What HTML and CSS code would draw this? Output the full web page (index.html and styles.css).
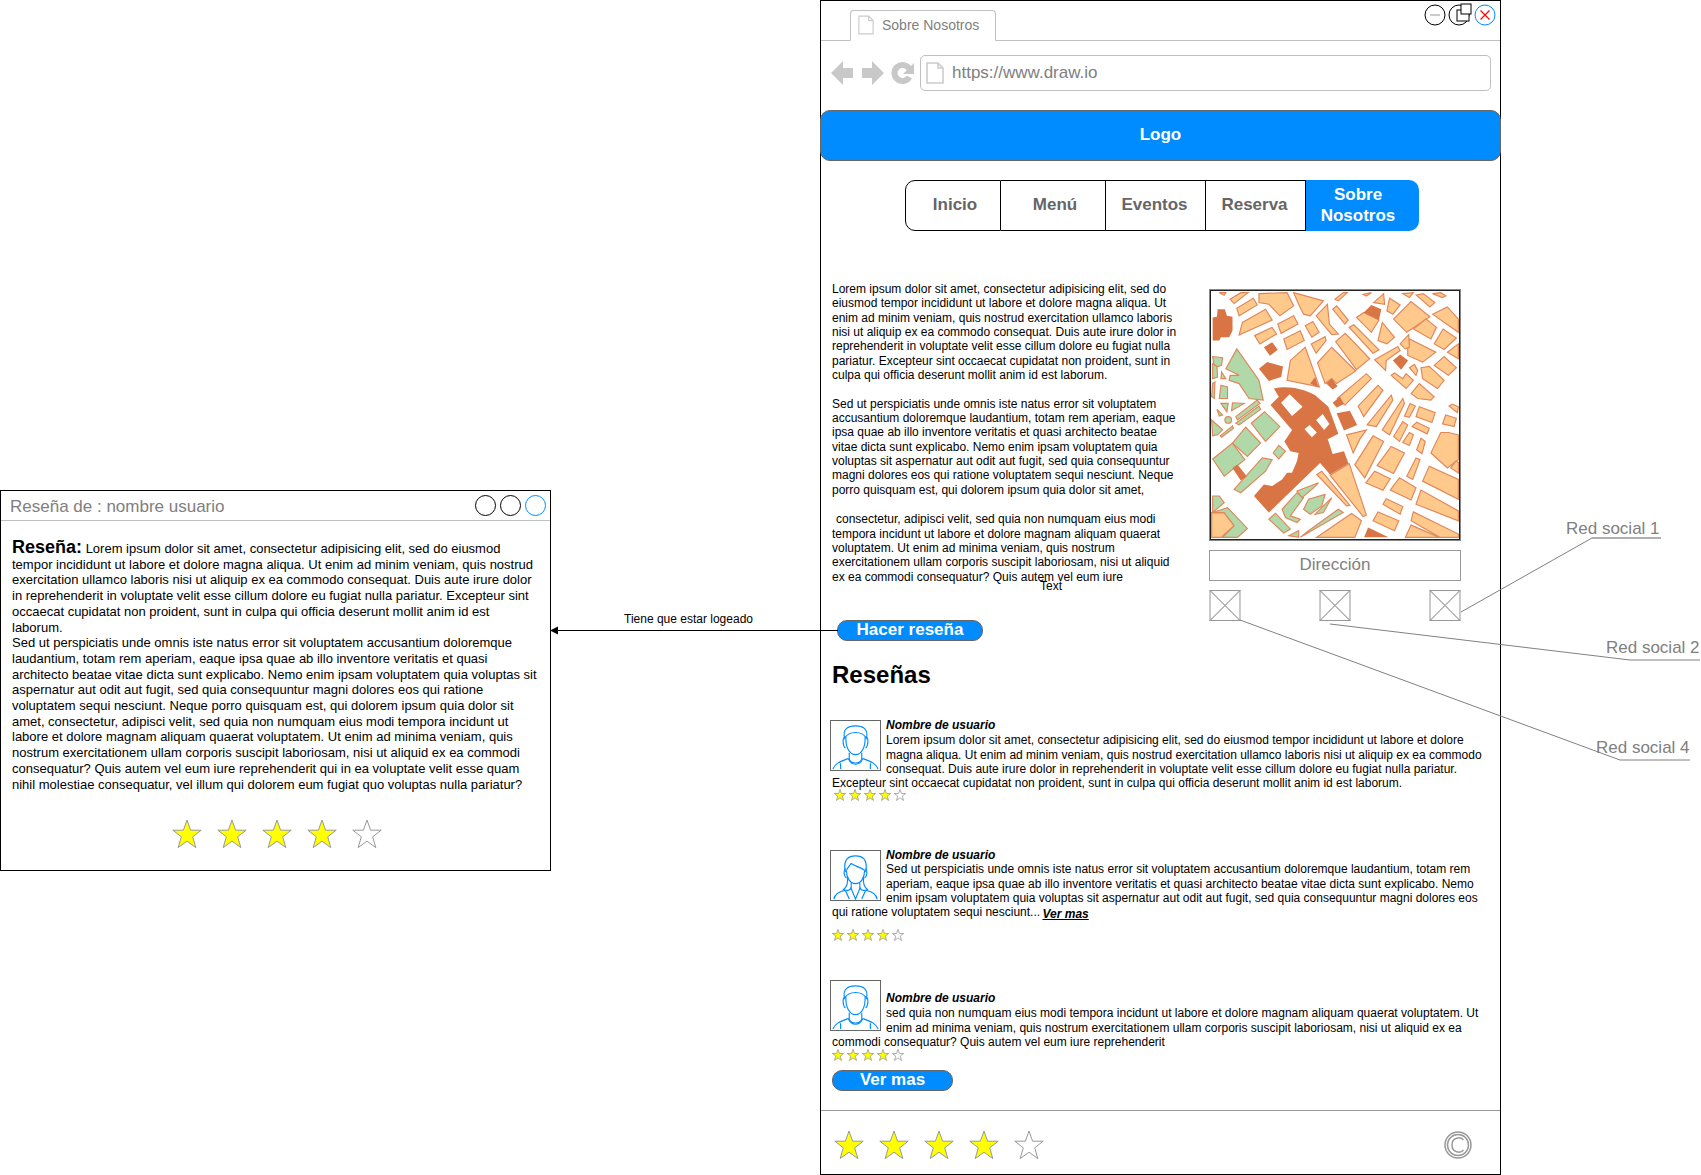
FILE: index.html
```html
<!DOCTYPE html>
<html lang="es">

<head>
    <meta charset="UTF-8">
    <title>Sobre Nosotros</title>
    <link rel="stylesheet" href="styles.css">
</head>

<body>
    <!-- iconos reutilizados -->
    <svg class="defs" width="0" height="0">
        <symbol id="star" viewBox="0 0 30 30">
            <path d="M15 1 L18.6 11.2 L29.2 11.2 L20.7 17.8 L23.8 28.6 L15 22.2 L6.2 28.6 L9.3 17.8 L0.8 11.2 L11.4 11.2 Z"/>
        </symbol>
        <symbol id="doc" viewBox="0 0 18 22">
            <path d="M1 1 H12 L17 6 V21 H1 Z M12 1 V6 H17" fill="none"/>
        </symbol>
        <symbol id="man" viewBox="0 0 51 51">
            <g fill="none" stroke="#008cff" stroke-width="1.2">
                <path d="M14 18 C12 8 18 5 25.5 5 C33 5 39 8 37 18 C34 13 30 12 25.5 12 C21 12 17 13 14 18 Z"/>
                <path d="M15.5 16 C15 27 19 35 25.5 35 C32 35 36 27 35.5 16"/>
                <path d="M14 17 C12 18 12 26 15 28 M37 17 C39 18 39 26 36 28"/>
                <path d="M19 33 V40 C22 45 29 45 32 40 V33"/>
                <path d="M18 39 C21 47 30 47 33 39"/>
                <path d="M2 50 C4 44 10 42 18 39 M49 50 C47 44 41 42 33 39"/>
                <path d="M10 50 V44 M41 50 V44"/>
            </g>
        </symbol>
        <symbol id="woman" viewBox="0 0 51 51">
            <g fill="none" stroke="#008cff" stroke-width="1.2">
                <path d="M15 22 C12 8 19 5 25.5 5 C32 5 39 8 36 22"/>
                <path d="M16 20 C18 17 20 14 21 13 C25 16 31 17 35 20"/>
                <path d="M16 20 C16 28 20 34 25.5 34 C31 34 35 28 35 20"/>
                <path d="M15 18 C13 20 13 26 16 28 M36 18 C38 20 38 26 35 28"/>
                <path d="M17 27 C18 34 16 38 13 40 C17 42 20 41 21 38 M34 27 C33 34 35 38 38 40 C34 42 31 41 30 38"/>
                <path d="M21 33 V39 L25.5 50 L30 39 V33"/>
                <path d="M3 50 C4 45 9 42 15 41 M48 50 C47 45 42 42 36 41"/>
                <path d="M15 41 L19 50 M36 41 L32 50"/>
            </g>
        </symbol>
    </svg>

    <main class="canvas">
        <!-- ventana: reseña -->
        <section class="popup">
            <header class="popup-title">
                <span>Reseña de : nombre usuario</span>
                <div class="popup-btns">
                    <i class="dot"></i>
                    <i class="dot"></i>
                    <i class="dot dot-blue"></i>
                </div>
            </header>
            <div class="popup-body">
                <p><b>Reseña:</b> Lorem ipsum dolor sit amet, consectetur adipisicing elit, sed do eiusmod tempor incididunt ut labore et dolore magna aliqua. Ut enim ad minim veniam, quis nostrud exercitation ullamco laboris nisi ut aliquip ex ea commodo consequat. Duis aute irure dolor in reprehenderit in voluptate velit esse cillum dolore eu fugiat nulla pariatur. Excepteur sint occaecat cupidatat non proident, sunt in culpa qui officia deserunt mollit anim id est laborum.<br>
                Sed ut perspiciatis unde omnis iste natus error sit voluptatem accusantium doloremque laudantium, totam rem aperiam, eaque ipsa quae ab illo inventore veritatis et quasi architecto beatae vitae dicta sunt explicabo. Nemo enim ipsam voluptatem quia voluptas sit aspernatur aut odit aut fugit, sed quia consequuntur magni dolores eos qui ratione voluptatem sequi nesciunt. Neque porro quisquam est, qui dolorem ipsum quia dolor sit amet, consectetur, adipisci velit, sed quia non numquam eius modi tempora incidunt ut labore et dolore magnam aliquam quaerat voluptatem. Ut enim ad minima veniam, quis nostrum exercitationem ullam corporis suscipit laboriosam, nisi ut aliquid ex ea commodi consequatur? Quis autem vel eum iure reprehenderit qui in ea voluptate velit esse quam nihil molestiae consequatur, vel illum qui dolorem eum fugiat quo voluptas nulla pariatur?</p>
                <div class="stars stars-big popup-stars">
                    <svg class="on"><use href="#star"/></svg>
                    <svg class="on"><use href="#star"/></svg>
                    <svg class="on"><use href="#star"/></svg>
                    <svg class="on"><use href="#star"/></svg>
                    <svg class="off"><use href="#star"/></svg>
                </div>
            </div>
        </section>

        <!-- ventana: navegador -->
        <section class="browser">
            <div class="tabbar">
                <div class="tab">
                    <svg class="doc-tab"><use href="#doc"/></svg>
                    <span>Sobre Nosotros</span>
                </div>
                <div class="win-btns">
                    <svg width="26" height="26" viewBox="0 0 26 26"><circle cx="13" cy="14" r="10" fill="#fff" stroke="#000"/><path d="M8 14 H18" stroke="#999"/></svg>
                    <svg width="26" height="26" viewBox="0 0 26 26"><circle cx="12" cy="14" r="10" fill="#fff" stroke="#000"/><rect x="10" y="9" width="12" height="11" fill="#fff" stroke="#000"/><rect x="14" y="3" width="10" height="10" fill="#fff" stroke="#000"/></svg>
                    <svg width="26" height="26" viewBox="0 0 26 26"><circle cx="13" cy="14" r="10" fill="#fff" stroke="#008cff"/><path d="M8.5 9.5 L17.5 18.5 M17.5 9.5 L8.5 18.5" stroke="#f00" stroke-width="1.2"/></svg>
                </div>
            </div>

            <div class="toolbar">
                <svg class="nav-icons" width="84" height="26" viewBox="0 0 84 26">
                    <path d="M0 13 L12 1 V8 H22 V18 H12 V25 Z"/>
                    <path d="M53 13 L41 1 V8 H31 V18 H41 V25 Z"/>
                    <path d="M78.4 9 A8 8 0 1 0 78.4 17" fill="none" stroke="#c8c8c8" stroke-width="6"/>
                    <path d="M83 3 V14 H72 Z"/>
                </svg>
                <div class="urlbar">
                    <svg class="doc-url"><use href="#doc"/></svg>
                    <span>https://www.draw.io</span>
                </div>
            </div>

            <div class="logo">Logo</div>

            <nav class="menu">
                <a href="#" class="m1">Inicio</a>
                <a href="#" class="m2">Menú</a>
                <a href="#" class="m3">Eventos</a>
                <a href="#" class="m4">Reserva</a>
                <a href="#" class="m5 active">Sobre Nosotros</a>
            </nav>

            <div class="about">
                <div class="about-text">
                    <p>Lorem ipsum dolor sit amet, consectetur adipisicing elit, sed do eiusmod tempor incididunt ut labore et dolore magna aliqua. Ut enim ad minim veniam, quis nostrud exercitation ullamco laboris nisi ut aliquip ex ea commodo consequat. Duis aute irure dolor in reprehenderit in voluptate velit esse cillum dolore eu fugiat nulla pariatur. Excepteur sint occaecat cupidatat non proident, sunt in culpa qui officia deserunt mollit anim id est laborum.</p>
                    <p class="second">Sed ut perspiciatis unde omnis iste natus error sit voluptatem accusantium doloremque laudantium, totam rem aperiam, eaque ipsa quae ab illo inventore veritatis et quasi architecto beatae vitae dicta sunt explicabo. Nemo enim ipsam voluptatem quia voluptas sit aspernatur aut odit aut fugit, sed quia consequuntur magni dolores eos qui ratione voluptatem sequi nesciunt. Neque porro quisquam est, qui dolorem ipsum quia dolor sit amet,</p>
                    <p class="indent">consectetur, adipisci velit, sed quia non numquam eius modi tempora incidunt ut labore et dolore magnam aliquam quaerat voluptatem. Ut enim ad minima veniam, quis nostrum exercitationem ullam corporis suscipit laboriosam, nisi ut aliquid ex ea commodi consequatur? Quis autem vel eum iure</p>
                    <span class="stray">Text</span>
                    <a href="#" class="btn btn-review">Hacer reseña</a>
                </div>
                <aside class="side">
                    <svg class="map" viewBox="60 30 750 750">
                        <g class="blocks">
                            <path d="M85 35 H105 L100 43 Z"/><path d="M118 55 L150 35 H172 L130 68 Z"/><path d="M205 38 L290 35 L310 75 L268 105 L235 70 L205 65 Z"/><path d="M310 35 L400 60 L360 105 L340 100 L325 70 Z"/>
                            <path d="M138 82 L188 52 L200 72 L145 105 Z"/><path d="M145 163 L155 125 L225 85 L245 118 Z"/><path d="M262 130 L310 105 L323 130 L272 158 Z"/><path d="M192 165 L245 140 L258 160 L208 190 Z"/>
                            <path d="M280 175 L330 150 L342 180 L290 207 Z"/><path d="M345 135 L368 122 L387 155 L365 170 Z"/><path d="M378 105 L412 70 L418 130 L445 160 L425 162 Z"/><path d="M428 85 L440 75 L475 118 L465 130 Z"/>
                            <path d="M435 55 L460 35 H472 L445 60 Z"/><path d="M520 40 L545 35 L530 45 Z"/><path d="M552 65 L582 38 L585 70 Z"/><path d="M592 90 L600 52 L632 72 L610 100 Z"/>
                            <path d="M612 115 L665 62 L722 108 L652 155 Z"/><path d="M680 42 L702 38 L737 65 L722 78 Z"/><path d="M640 38 L672 35 L660 50 Z"/><path d="M730 38 L755 35 L770 45 L760 50 Z"/>
                            <path d="M730 100 L775 78 L808 115 V155 Z"/><path d="M672 145 L710 115 L742 140 L725 175 Z"/><path d="M735 190 L762 145 L802 172 L765 207 Z"/><path d="M775 215 L808 190 V235 Z"/>
                            <path d="M735 255 L765 228 L802 262 L778 285 Z"/><path d="M655 205 L660 175 L740 215 L700 245 L655 225 Z"/><path d="M632 190 L658 162 L660 200 L648 205 Z"/><path d="M555 238 L625 198 L632 210 L590 240 L588 270 Z"/>
                            <path d="M565 180 L578 125 L615 170 L592 190 Z"/><path d="M478 140 L492 132 L568 208 L550 218 Z"/><path d="M437 183 L466 158 L540 235 L500 268 Z"/><path d="M363 190 L405 168 L408 180 L378 218 Z"/>
                            <path d="M382 247 L425 200 L498 272 L440 310 L425 295 L405 310 Z"/><path d="M290 300 L300 240 L345 200 L388 320 Z"/><path d="M500 110 L522 95 L568 118 L545 155 Z"/><path d="M442 355 L530 280 L545 295 L465 375 Z"/>
                            <path d="M505 378 L565 315 L580 330 L522 410 Z"/><path d="M532 435 L605 345 L610 360 L560 440 Z"/><path d="M578 450 L640 355 L645 370 L600 465 Z"/><path d="M612 470 L640 425 L655 435 L630 485 Z"/>
                            <path d="M645 408 L662 370 L678 378 L660 412 Z"/><path d="M680 410 L690 380 L738 398 L728 428 Z"/><path d="M668 440 L682 427 L720 445 L714 462 Z"/><path d="M640 488 L660 458 L672 465 L660 497 Z"/>
                            <path d="M682 510 L695 475 L708 485 L698 522 Z"/><path d="M760 432 L770 405 L802 415 L795 440 Z"/><path d="M725 520 L755 458 L778 458 L808 465 V540 L775 565 Z"/><path d="M780 378 L790 372 L808 380 L805 398 Z"/>
                            <path d="M785 565 L800 545 L808 548 V580 Z"/><path d="M470 465 L530 450 L510 478 L490 520 Z"/><path d="M495 555 L550 468 L582 485 L525 595 Z"/><path d="M562 558 L605 500 L645 520 L612 582 Z"/>
                            <path d="M652 590 L680 535 L692 540 L670 600 Z"/><path d="M528 610 L555 575 L602 598 L580 633 Z"/><path d="M602 632 L630 595 L680 625 L665 662 Z"/><path d="M700 605 L720 560 L808 600 V660 Z"/>
                            <path d="M680 675 L695 632 L808 695 V725 Z"/><path d="M665 725 L672 698 L808 765 V775 H752 Z"/><path d="M580 675 L590 658 L640 682 L632 705 Z"/><path d="M550 725 L565 698 L628 725 L615 755 Z"/>
                            <path d="M648 775 L665 738 L750 775 Z"/><path d="M380 775 L485 703 L515 725 L495 775 Z"/><path d="M380 585 L395 575 L480 678 L470 680 Z"/><path d="M420 587 L478 552 L530 708 L520 712 Z"/>
                            <path d="M62 700 L100 700 L130 740 L90 775 H62 Z"/><path d="M605 285 L615 278 L640 295 L650 280 L672 300 L650 325 Z"/><path d="M665 340 L690 310 L735 350 L725 360 L685 355 Z"/><path d="M660 262 L675 252 L685 270 L680 285 Z"/><path d="M695 262 L720 258 L765 300 L745 325 L700 295 Z"/>
                        </g>
                        <g class="parks">
                            <path d="M65 228 L95 232 L92 255 L70 262 Z"/><path d="M105 265 L138 205 L205 300 L218 360 L175 355 L145 310 L115 300 L118 285 L145 285 Z"/><path d="M182 430 L222 395 L268 440 L225 485 Z"/><path d="M125 490 L165 442 L210 490 L170 530 Z"/>
                            <path d="M65 538 L125 490 L162 540 L100 590 Z"/><path d="M130 630 L215 535 L245 540 L225 575 L150 640 Z"/><path d="M248 520 L265 497 L285 515 L265 538 Z"/><path d="M62 420 L95 450 L80 465 L65 468 Z"/>
                            <path d="M135 410 L200 360 L208 370 L140 420 Z"/><path d="M135 430 L205 378 L210 388 L145 435 Z"/><path d="M88 468 L125 438 L128 445 L92 472 Z"/><path d="M85 355 L90 315 L110 320 L110 355 Z"/>
                            <path d="M122 392 L125 368 L160 370 Z"/><path d="M90 370 H112 L108 395 Z"/><path d="M78 388 L95 405 L85 408 Z"/><circle cx="112" cy="420" r="10"/>
                            <path d="M65 310 L72 305 L70 355 L62 350 Z"/><path d="M65 250 L78 258 L80 290 L65 295 Z"/><path d="M92 275 L105 295 H90 Z"/><path d="M65 650 H85 L100 670 L65 700 Z"/>
                            <path d="M65 700 L110 685 L170 748 L140 775 H95 L130 740 L100 700 Z"/><path d="M235 720 L255 702 L300 750 L280 762 Z"/><path d="M275 690 L320 640 L340 655 L300 710 L330 720 L320 730 L285 715 Z"/><path d="M320 635 L385 610 L365 630 L335 655 Z"/>
                            <path d="M340 690 L355 660 L405 645 L395 680 L360 705 Z"/><path d="M375 705 L425 655 L400 700 Z"/><path d="M355 755 L445 690 L460 700 L330 775 Z"/><path d="M295 770 L325 755 V775 Z"/>
                        </g>
                        <g class="dark">
                            <path d="M65 110 L78 108 L80 85 H102 L108 105 L125 108 V150 L115 170 H90 L85 180 H65 Z"/><path d="M220 200 L245 185 L262 208 L238 226 Z"/><path d="M205 265 L230 245 L278 258 L272 290 L235 302 Z"/><path d="M522 95 L545 72 L575 85 L568 118 Z"/>
                            <path d="M610 240 L632 222 L656 240 L635 268 Z"/><path d="M360 310 L375 290 L385 322 Z"/><path d="M408 310 L425 295 L443 318 L428 328 Z"/><path d="M428 368 L450 350 L462 372 L440 382 Z"/>
                            <path d="M440 400 L480 392 L502 435 L462 452 Z"/><path d="M523 775 L535 745 L597 775 Z"/><path d="M125 565 L140 555 L168 590 L150 603 Z"/>
                            <path d="M250 325 C290 315 340 325 375 345 L415 380 L445 462 L413 478 L428 523 L462 515 L476 552 L420 585 L390 550 L235 700 L190 650 L220 615 L245 620 L275 600 L290 580 L305 580 L320 545 L325 520 L300 515 L282 485 L305 450 L240 375 L265 350 Z"/>
                        </g>
                        <g class="holes">
                            <path d="M272 368 L298 342 L337 380 L305 408 Z"/><path d="M378 420 L398 402 L418 432 L402 450 Z"/><path d="M343 448 L358 435 L380 458 L365 472 Z"/>
                        </g>
                    </svg>
                    <div class="address">Dirección</div>
                    <div class="socials">
                        <svg viewBox="0 0 30 30"><rect x="0.5" y="0.5" width="29" height="29"/><path d="M0 0 L30 30 M30 0 L0 30"/></svg>
                        <svg viewBox="0 0 30 30"><rect x="0.5" y="0.5" width="29" height="29"/><path d="M0 0 L30 30 M30 0 L0 30"/></svg>
                        <svg viewBox="0 0 30 30"><rect x="0.5" y="0.5" width="29" height="29"/><path d="M0 0 L30 30 M30 0 L0 30"/></svg>
                    </div>
                </aside>
            </div>

            <section class="reviews">
                <h2>Reseñas</h2>

                <article class="review r1">
                    <svg class="avatar"><use href="#man"/></svg>
                    <p><b>Nombre de usuario</b>
                    Lorem ipsum dolor sit amet, consectetur adipisicing elit, sed do eiusmod tempor incididunt ut labore et dolore magna aliqua. Ut enim ad minim veniam, quis nostrud exercitation ullamco laboris nisi ut aliquip ex ea commodo consequat. Duis aute irure dolor in reprehenderit in voluptate velit esse cillum dolore eu fugiat nulla pariatur. Excepteur sint occaecat cupidatat non proident, sunt in culpa qui officia deserunt mollit anim id est laborum.</p>
                    <div class="stars">
                        <svg class="on"><use href="#star"/></svg>
                        <svg class="on"><use href="#star"/></svg>
                        <svg class="on"><use href="#star"/></svg>
                        <svg class="on"><use href="#star"/></svg>
                        <svg class="off"><use href="#star"/></svg>
                    </div>
                </article>

                <article class="review r2">
                    <svg class="avatar"><use href="#woman"/></svg>
                    <p><b>Nombre de usuario</b>
                    Sed ut perspiciatis unde omnis iste natus error sit voluptatem accusantium doloremque laudantium, totam rem aperiam, eaque ipsa quae ab illo inventore veritatis et quasi architecto beatae vitae dicta sunt explicabo. Nemo enim ipsam voluptatem quia voluptas sit aspernatur aut odit aut fugit, sed quia consequuntur magni dolores eos qui ratione voluptatem sequi nesciunt... <a href="#" class="more">Ver mas</a></p>
                    <div class="stars">
                        <svg class="on"><use href="#star"/></svg>
                        <svg class="on"><use href="#star"/></svg>
                        <svg class="on"><use href="#star"/></svg>
                        <svg class="on"><use href="#star"/></svg>
                        <svg class="off"><use href="#star"/></svg>
                    </div>
                </article>

                <article class="review r3">
                    <svg class="avatar"><use href="#man"/></svg>
                    <p><b>Nombre de usuario</b>
                    sed quia non numquam eius modi tempora incidunt ut labore et dolore magnam aliquam quaerat voluptatem. Ut enim ad minima veniam, quis nostrum exercitationem ullam corporis suscipit laboriosam, nisi ut aliquid ex ea commodi consequatur? Quis autem vel eum iure reprehenderit</p>
                    <div class="stars">
                        <svg class="on"><use href="#star"/></svg>
                        <svg class="on"><use href="#star"/></svg>
                        <svg class="on"><use href="#star"/></svg>
                        <svg class="on"><use href="#star"/></svg>
                        <svg class="off"><use href="#star"/></svg>
                    </div>
                </article>

                <a href="#" class="btn btn-more">Ver mas</a>
            </section>

            <footer class="foot">
                <div class="stars stars-big">
                    <svg class="on"><use href="#star"/></svg>
                    <svg class="on"><use href="#star"/></svg>
                    <svg class="on"><use href="#star"/></svg>
                    <svg class="on"><use href="#star"/></svg>
                    <svg class="off"><use href="#star"/></svg>
                </div>
                <svg class="copy" width="28" height="28" viewBox="0 0 28 28">
                    <circle cx="14" cy="14" r="13"/>
                    <circle cx="14" cy="14" r="10.5"/>
                    <path d="M19.5 9 C16.5 5.5 8 6 8 14 C8 22 16.5 22.5 19.5 19"/>
                </svg>
            </footer>
        </section>

        <!-- lineas y notas sobre el lienzo -->
        <svg class="wires" width="1701" height="1175">
            <path class="wire" d="M1461 612 L1592 538"/>
            <path class="wire-thick" d="M1592 538 H1661"/>
            <path class="wire" d="M1330 624 L1630 660 H1700"/>
            <path class="wire" d="M1240 620 L1620 760 H1690"/>
            <path class="arrow" d="M838 630.5 H556"/>
            <path d="M550 630.5 L558 626.5 V634.5 Z"/>
        </svg>
        <span class="note n1">Red social 1</span>
        <span class="note n2">Red social 2</span>
        <span class="note n4">Red social 4</span>
        <span class="edge-label">Tiene que estar logeado</span>
    </main>
</body>

</html>
```

FILE: styles.css
```css
* {
    box-sizing: border-box;
}

body {
    margin: 0;
    background: #fff;
    font-family: "Liberation Sans", Arial, sans-serif;
    color: #000;
}

p {
    margin: 0;
}

a {
    text-decoration: none;
}

.defs {
    position: absolute;
}

.canvas {
    position: relative;
    width: 1701px;
    height: 1175px;
    overflow: hidden;
}

/* estrellas */
.stars {
    display: flex;
    gap: 3px;
}

.stars svg {
    width: 12px;
    height: 12px;
    stroke: #999;
    stroke-width: 2;
}

.stars-big {
    gap: 15px;
}

.stars-big svg {
    width: 30px;
    height: 30px;
    stroke-width: 1;
}

.stars .on {
    fill: #ff0;
}

.stars .off {
    fill: #fff;
}

/* ventana de la reseña */
.popup {
    position: absolute;
    left: 0;
    top: 490px;
    width: 551px;
    height: 381px;
    border: 1px solid #000;
}

.popup-title {
    display: flex;
    justify-content: space-between;
    align-items: center;
    height: 30px;
    padding: 2px 4px 0 9px;
    border-bottom: 1px solid #c0c0c0;
    font-size: 17px;
    color: #808080;
}

.popup-btns {
    display: flex;
    gap: 4px;
    margin-top: -2px;
}

.dot {
    width: 21px;
    height: 21px;
    border: 1px solid #000;
    border-radius: 50%;
}

.dot-blue {
    border-color: #008cff;
}

.popup-body {
    padding: 19px 11px 0;
    font-size: 13px;
    line-height: 15.7px;
}

.popup-body b {
    font-size: 18px;
}

.popup-stars {
    justify-content: center;
    margin-top: 27px;
    padding-left: 3px;
}

/* ventana del navegador */
.browser {
    position: absolute;
    left: 820px;
    top: 0;
    width: 681px;
    height: 1175px;
    display: flex;
    flex-direction: column;
    border: 1px solid #000;
}

.tabbar {
    position: relative;
    height: 40px;
    padding-left: 29px;
    border-bottom: 1px solid #c0c0c0;
}

.tab {
    display: flex;
    align-items: center;
    gap: 8px;
    width: 146px;
    height: 31px;
    margin-top: 9px;
    padding: 0 7px 2px;
    background: #fff;
    border: 1px solid #c0c0c0;
    border-bottom-color: #fff;
    border-radius: 4px 4px 0 0;
    font-size: 14px;
    color: #808080;
}

.doc-tab {
    width: 16px;
    height: 20px;
    stroke: #ccc;
    stroke-width: 1.3;
}

.win-btns {
    position: absolute;
    right: 2px;
    top: 0;
    display: flex;
}

.win-btns svg {
    margin-left: -1px;
}

.toolbar {
    display: flex;
    align-items: center;
    height: 69px;
    padding: 0 9px 6px 10px;
}

.nav-icons {
    flex: none;
    margin-right: 5px;
    fill: #c8c8c8;
}

.urlbar {
    display: flex;
    align-items: center;
    gap: 8px;
    flex: 1;
    height: 36px;
    padding-left: 5px;
    border: 1px solid #c0c0c0;
    border-radius: 5px;
    font-size: 17px;
    color: #808080;
}

.doc-url {
    width: 18px;
    height: 22px;
    stroke: #ccc;
    stroke-width: 1.6;
}

.logo {
    height: 51px;
    margin: 0 -1px;
    background: #008cff;
    border: 1px solid #666;
    border-radius: 10px;
    font-size: 17px;
    font-weight: bold;
    line-height: 47px;
    text-align: center;
    color: #fff;
}

.menu {
    display: flex;
    height: 51px;
    margin: 19px 0 0 84px;
    font-size: 17px;
    font-weight: bold;
    line-height: 21px;
    text-align: center;
}

.menu a {
    display: flex;
    align-items: center;
    justify-content: center;
    height: 100%;
    padding: 0 8px 2px;
    border: solid #000;
    border-width: 1px 1px 1px 0;
    color: #666;
}

.menu .m1 {
    width: 96px;
    padding-left: 12px;
    border-left-width: 1px;
    border-radius: 10px 0 0 10px;
}

.menu .m2 {
    width: 105px;
    padding-left: 12px;
}

.menu .m3,
.menu .m4 {
    width: 100px;
    padding: 0 2px 2px 0;
}

.menu .active {
    width: 113px;
    padding: 0 16px 2px 8px;
    background: #008cff;
    border-color: #008cff;
    border-radius: 0 10px 10px 0;
    color: #fff;
}

/* texto y mapa */
.about {
    display: flex;
    justify-content: space-between;
    padding: 51px 39px 0 11px;
}

.about-text {
    position: relative;
    width: 352px;
    font-size: 12px;
    line-height: 14.33px;
}

.about-text p {
    margin-bottom: 14.33px;
}

.about-text .second {
    margin-bottom: 15.3px;
}

.about-text .indent {
    margin-bottom: 0;
    text-indent: 4px;
}

.stray {
    position: absolute;
    left: 208px;
    top: 297px;
}

.side {
    width: 252px;
    margin-top: 7px;
}

.map {
    display: block;
    width: 252px;
    height: 252px;
    background: #fff;
    border: 2px solid #222;
    outline: 1px solid #888;
    outline-offset: -1px;
}

.blocks path {
    fill: #ffc98c;
    stroke: #e0875a;
    stroke-width: 3.5;
}

.parks path,
.parks circle {
    fill: #b0d8a8;
    stroke: #e0875a;
    stroke-width: 3.5;
}

.dark path {
    fill: #d97445;
}

.holes path {
    fill: #fff;
}

.address {
    height: 31px;
    margin-top: 9px;
    border: 1px solid #999;
    font-size: 17px;
    line-height: 28px;
    text-align: center;
    color: #808080;
}

.socials {
    display: flex;
    justify-content: space-between;
    margin-top: 9px;
}

.socials svg {
    width: 32px;
    height: 31px;
    fill: none;
    stroke: #999;
}

.btn {
    display: block;
    background: #008cff;
    border: 1px solid #666;
    border-radius: 10px;
    font-size: 17px;
    font-weight: bold;
    line-height: 18px;
    text-align: center;
    color: #fff;
}

.btn-review {
    width: 146px;
    height: 21px;
    margin: 36px 0 0 5px;
}

/* reseñas */
.reviews {
    padding: 0 15px 0 11px;
    font-size: 12px;
    line-height: 14.33px;
}

.reviews h2 {
    margin: 20px 0 29px;
    font-size: 24px;
    line-height: 28px;
}

.review {
    height: 130px;
}

.review b {
    display: block;
    margin-bottom: 1px;
    font-style: italic;
}

.avatar {
    float: left;
    width: 51px;
    height: 51px;
    margin: 2px 5px 2px -2px;
    border: 1px solid #666;
}

.r2 {
    height: 132px;
}

.r2 b {
    margin-bottom: 0;
}

.r3 {
    height: 90px;
}

.r3 .avatar {
    margin-top: 0;
}

.r3 p {
    padding-top: 11px;
}

.r1 .stars {
    margin: -2px 0 0 2px;
}

.r2 .stars {
    margin-top: 9px;
}

.more {
    font-size: 12px;
    font-weight: bold;
    font-style: italic;
    text-decoration: underline;
    color: #000;
    position: relative;
    top: 2px;
    margin-left: -1px;
}

.btn-more {
    width: 121px;
    height: 21px;
}

.foot {
    display: flex;
    justify-content: space-between;
    align-items: center;
    height: 64px;
    margin-top: auto;
    padding: 4px 28px 0 13px;
    border-top: 1px solid #999;
}

.copy {
    fill: none;
    stroke: #999;
    stroke-width: 1.5;
}

/* lineas de anotacion */
.wires {
    position: absolute;
    left: 0;
    top: 0;
    pointer-events: none;
}

.wire {
    fill: none;
    stroke: #808080;
}

.wire-thick {
    fill: none;
    stroke: #b0b0b0;
    stroke-width: 2;
}

.arrow {
    fill: none;
    stroke: #000;
}

.note {
    position: absolute;
    font-size: 17px;
    line-height: 20px;
    color: #808080;
}

.n1 {
    left: 1566px;
    top: 519px;
}

.n2 {
    left: 1606px;
    top: 638px;
}

.n4 {
    left: 1596px;
    top: 738px;
}

.edge-label {
    position: absolute;
    left: 624px;
    top: 612px;
    font-size: 12px;
    line-height: 14px;
}
```
